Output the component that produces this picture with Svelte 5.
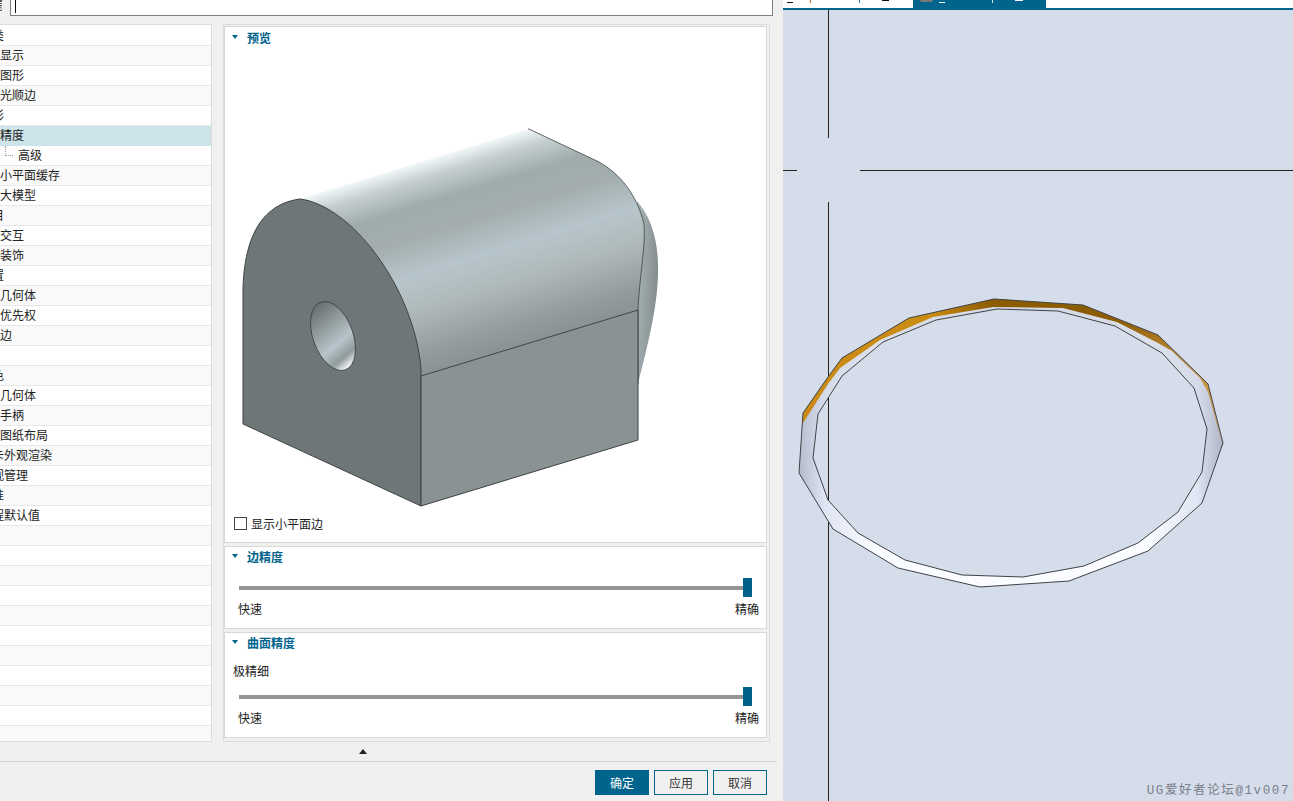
<script>
  // tree is scrolled sideways in the dialog, so some labels start cut off (cut: true)
  const rows = [
    { text: '类', cut: true },
    { text: '显示' },
    { text: '图形' },
    { text: '光顺边' },
    { text: '形', cut: true },
    { text: '精度', selected: true },
    { text: '高级', child: true },
    { text: '小平面缓存' },
    { text: '大模型' },
    { text: '目', cut: true },
    { text: '交互' },
    { text: '装饰' },
    { text: '置', cut: true },
    { text: '几何体' },
    { text: '优先权' },
    { text: '边' },
    { text: '' },
    { text: '色', cut: true },
    { text: '几何体' },
    { text: '手柄' },
    { text: '图纸布局' },
    { text: '卡外观渲染', cut: true },
    { text: '视管理', cut: true },
    { text: '准', cut: true },
    { text: '程默认值', cut: true },
    ...Array.from({ length: 11 }, () => ({ text: '' }))
  ];

  const outer = 'M803 413 L828 377 L842 358 L909 318 L994 299 L1083 305 L1158 335 L1208 384 L1223 443 L1202 503 L1148 551 L1069 581 L980 587 L898 568 L833 529 L799 473 Z';
  const inner = 'M818 414 L813 458 L828 500 L858 533 L905 560 L962 575 L1023 577 L1084 566 L1138 543 L1178 512 L1202 472 L1207 429 L1194 388 L1162 353 L1115 326 L1058 311 L997 309 L936 320 L883 342 L842 376 Z';
  const rim = 'M803 413 L828 377 L842 358 L909 318 L994 299 L1083 305 L1158 335 L1208 384 L1222 443 L1208 392 L1200 378 L1172 351 L1158 343 L1117 322 L1063 308 L993 307 L933 317 L880 340 L840 368 L828 384 L803 423 Z';
</script>

<div class="page">
  <div class="dialog">
    <div class="filter">
      <span class="filter-label">滤</span>
      <div class="filter-input"><span class="caret"></span></div>
    </div>

    <div class="body">
      <div class="tree">
        {#each rows as row, i}
          <div class="row" class:odd={i % 2 === 1} class:selected={row.selected}>
            {#if row.child}<span class="elbow"></span>{/if}
            <span class:cut={row.cut}>{row.text}</span>
          </div>
        {/each}
      </div>

      <div class="group">
        <section class="card preview">
          <h3 class="title"><i class="caret-down"></i>预览</h3>
          <svg class="model" viewBox="0 0 540 470" width="540" height="470">
            <defs>
              <linearGradient id="roof" gradientUnits="userSpaceOnUse" x1="189" y1="119" x2="249" y2="315">
                <stop offset="0" stop-color="#f2f7f8" />
                <stop offset="0.08" stop-color="#c5cfd0" />
                <stop offset="0.2" stop-color="#a0abab" />
                <stop offset="0.35" stop-color="#a4aeae" />
                <stop offset="0.52" stop-color="#b7c5cc" />
                <stop offset="0.7" stop-color="#aeb8b8" />
                <stop offset="0.9" stop-color="#929c9c" />
                <stop offset="1" stop-color="#8a9393" />
              </linearGradient>
              <linearGradient id="sliver" x1="0" y1="0" x2="1" y2="0.3">
                <stop offset="0" stop-color="#aab5b8" />
                <stop offset="1" stop-color="#858f90" />
              </linearGradient>
              <linearGradient id="bore" x1="0.3" y1="0" x2="0.5" y2="1">
                <stop offset="0" stop-color="#62696a" />
                <stop offset="0.35" stop-color="#929c9c" />
                <stop offset="0.65" stop-color="#b7c5cc" />
                <stop offset="0.85" stop-color="#8f9a9a" />
                <stop offset="1" stop-color="#f4f7f7" />
              </linearGradient>
            </defs>
            <path d="M412 156 C426 172 433 195 433 222 C434 260 420 310 413 339 Z" fill="url(#sliver)" />
            <path d="M75 154 L300 85 Q303 84 306 85 L372 116 C395 128 412 150 419 179 C421 200 414 235 413 265 L196 331 L196 323 C188 240 125 160 75 154 Z" fill="url(#roof)" />
            <g stroke="#3d4242" stroke-width="1" stroke-linejoin="round">
              <path d="M303 84 Q305 84 306 85 L372 116 C395 128 412 150 419 179 C421 200 414 235 413 265 L413 339" fill="none" stroke-width="0.8" />
              <path d="M18 379 L18 243 C20 180 45 158 75 154 C125 160 188 240 196 323 L196 461 Z" fill="#6f7677" />
              <path d="M196 331 L413 265 L413 395 L196 461 Z" fill="#8a9293" />
              <ellipse cx="108" cy="291" rx="20" ry="36" transform="rotate(-20 108 291)" fill="url(#bore)" stroke-width="0.8" />
            </g>
          </svg>
          <label class="check"><span class="box"></span>显示小平面边</label>
        </section>

        <section class="card edge">
          <h3 class="title"><i class="caret-down"></i>边精度</h3>
          <div class="slider"><span class="thumb"></span></div>
          <div class="ends"><span>快速</span><span>精确</span></div>
        </section>

        <section class="card face">
          <h3 class="title"><i class="caret-down"></i>曲面精度</h3>
          <div class="value">极精细</div>
          <div class="slider"><span class="thumb"></span></div>
          <div class="ends"><span>快速</span><span>精确</span></div>
        </section>
      </div>
    </div>

    <div class="collapse"><i class="caret-up"></i></div>

    <div class="footer">
      <button class="btn primary">确定</button>
      <button class="btn">应用</button>
      <button class="btn">取消</button>
    </div>
  </div>

  <div class="viewport">
    <div class="tabs">
      <div class="tab">
        <i class="mark dash"></i>
        <i class="mark tick orange"></i>
        <i class="mark tick blue"></i>
        <i class="mark top"></i>
      </div>
      <div class="tab active">
        <i class="mark part"></i>
        <i class="mark dash"></i>
        <i class="mark tick"></i>
        <i class="mark top"></i>
      </div>
    </div>

    <div class="canvas">
      <svg class="scene" viewBox="783 10 510 791" width="510" height="791">
        <defs>
          <linearGradient id="ring" gradientUnits="userSpaceOnUse" x1="799" y1="0" x2="1223" y2="0">
            <stop offset="0" stop-color="#b4bacb" />
            <stop offset="0.06" stop-color="#dfe5f3" />
            <stop offset="0.18" stop-color="#fbfcff" />
            <stop offset="0.82" stop-color="#fbfcff" />
            <stop offset="0.94" stop-color="#dfe5f3" />
            <stop offset="1" stop-color="#aab0c0" />
          </linearGradient>
          <linearGradient id="shade" gradientUnits="userSpaceOnUse" x1="0" y1="300" x2="0" y2="490">
            <stop offset="0" stop-color="#c3c9d8" stop-opacity="0.7" />
            <stop offset="1" stop-color="#c3c9d8" stop-opacity="0" />
          </linearGradient>
          <linearGradient id="rim" gradientUnits="userSpaceOnUse" x1="803" y1="0" x2="1222" y2="0">
            <stop offset="0" stop-color="#c98a18" />
            <stop offset="0.3" stop-color="#cc8d14" />
            <stop offset="0.45" stop-color="#8c5c00" />
            <stop offset="0.75" stop-color="#8c5c00" />
            <stop offset="0.95" stop-color="#c89545" />
            <stop offset="1" stop-color="#c89545" />
          </linearGradient>
        </defs>
        <path d="M828.500 10 V138 M828.500 202 V801 M783 170.500 H797 M860 170.500 H1293" stroke="#2a2018" fill="none" />
        <path d="{outer} {inner}" fill="url(#ring)" fill-rule="evenodd" />
        <path d="{outer} {inner}" fill="url(#shade)" fill-rule="evenodd" />
        <path d={rim} fill="url(#rim)" />
        <path d={outer} fill="none" stroke="#3f4246" stroke-width="1" />
        <path d={inner} fill="none" stroke="#3f4246" stroke-width="1" />
      </svg>
      <div class="watermark">UG爱好者论坛@1v007</div>
    </div>
  </div>
</div>

<style>
  :global(body) {
    margin: 0;
    overflow: hidden;
  }

  .page {
    display: flex;
    width: 1293px;
    height: 801px;
    overflow: hidden;
    font-family: "Noto Sans CJK SC", "Liberation Sans", sans-serif;
    font-size: 12px;
    color: #222;
  }

  /* Dialog */
  .dialog {
    width: 783px;
    flex: none;
    background: #f0f0f0;
    display: flex;
    flex-direction: column;
  }

  .filter {
    height: 16px;
    display: flex;
    margin-right: 10px;
  }

  .filter-label {
    width: 10px;
    margin-left: -8px;
    margin-right: -2px;
    flex: none;
    line-height: 10px;
    height: 12px;
    overflow: hidden;
    color: #333;
  }

  .filter-input {
    flex: 1;
    margin-left: 10px;
    background: #fff;
    border: 1px solid #808080;
    border-top: 0;
    padding-left: 4px;
  }

  .caret {
    display: block;
    width: 1px;
    height: 13px;
    background: #111;
  }

  .body {
    display: flex;
    gap: 11px;
    margin-top: 8px;
    height: 718px;
  }

  /* Tree */
  .tree {
    width: 211px;
    height: 716px;
    flex: none;
    overflow: hidden;
    background: #fff;
    border: 1px solid #dcdcdc;
    border-left: 0;
  }

  .row {
    height: 18px;
    padding-bottom: 1px;
    border-bottom: 1px solid #e8e8e8;
    display: flex;
    align-items: center;
    white-space: nowrap;
    line-height: 18px;
  }

  .row:first-child {
    margin-top: 1px;
  }

  .row.odd {
    background: #f9f9f9;
  }

  .row.selected {
    background: #cde4ea;
    border-bottom-color: #cde4ea;
  }

  .cut {
    margin-left: -8px;
  }

  .elbow {
    width: 8px;
    height: 10px;
    margin: 0 5px 9px 5px;
    border-left: 1px dotted #999;
    border-bottom: 1px dotted #999;
    box-sizing: border-box;
  }

  /* Right column */
  .group {
    width: 547px;
    flex: none;
    box-sizing: border-box;
    border: 1px solid #dcdcdc;
    padding: 1px 2px 3px 0;
    display: flex;
    flex-direction: column;
    gap: 3px;
  }

  .card {
    background: #fff;
    border: 1px solid #d8d8d8;
    box-sizing: border-box;
    display: flex;
    flex-direction: column;
  }

  .preview {
    height: 517px;
    position: relative;
  }

  .edge {
    height: 83px;
  }

  .face {
    height: 106px;
  }

  .title {
    margin: 0;
    height: 18px;
    flex: none;
    padding-left: 7px;
    display: flex;
    align-items: center;
    font-size: 12px;
    font-weight: 700;
    color: #00648c;
  }

  .preview .title {
    height: 20px;
  }

  .caret-down {
    width: 0;
    height: 0;
    margin-right: 9px;
    border: 3.500px solid transparent;
    border-top: 4px solid #00648c;
    border-bottom: 0;
  }

  .model {
    display: block;
    margin-top: -2px;
    flex: none;
  }

  .check {
    display: flex;
    align-items: center;
    height: 20px;
    position: absolute;
    left: 9px;
    top: 486px;
  }

  .box {
    width: 13px;
    height: 13px;
    box-sizing: border-box;
    border: 1px solid #444;
    background: #fff;
    margin-right: 4px;
  }

  .slider {
    position: relative;
    height: 19px;
    margin: 13px 0 0 14px;
    width: 513px;
  }

  .slider::before {
    content: '';
    position: absolute;
    left: 0;
    right: 5px;
    top: 8px;
    height: 4px;
    background: #959595;
  }

  .thumb {
    position: absolute;
    right: 0;
    top: 0;
    width: 9px;
    height: 19px;
    background: #006289;
  }

  .ends {
    display: flex;
    justify-content: space-between;
    padding: 0 7px 0 13px;
    margin-top: 2px;
    line-height: 20px;
  }

  .value {
    padding-left: 8px;
    line-height: 20px;
    margin-top: 10px;
  }

  .face .slider {
    margin-top: 6px;
  }

  /* Footer */
  .collapse {
    height: 19px;
    display: flex;
    align-items: center;
    padding-left: 359px;
    margin-right: 6px;
    border-bottom: 1px solid #d6d6d6;
  }

  .caret-up {
    width: 0;
    height: 0;
    border: 4.500px solid transparent;
    border-bottom: 5px solid #222;
    border-top: 0;
  }

  .footer {
    display: flex;
    justify-content: flex-end;
    gap: 5px;
    padding: 8px 16px 0 0;
  }

  .btn {
    width: 54px;
    height: 25px;
    padding: 0;
    border: 1px solid #00648c;
    background: #f0f0f0;
    color: #333;
    font: inherit;
  }

  .btn.primary {
    background: #00648c;
    color: #fff;
  }

  /* Viewport */
  .viewport {
    flex: 1;
    display: flex;
    flex-direction: column;
    background: #d5dcea;
  }

  .tabs {
    height: 8px;
    background: #fff;
    border-bottom: 2px solid #00648c;
    display: flex;
    overflow: hidden;
  }

  .tab {
    width: 130px;
    display: flex;
    align-items: flex-start;
  }

  .tab.active {
    width: 133px;
    background: #00648c;
  }

  .mark {
    display: block;
    flex: none;
    background: #111;
  }

  .tab .dash {
    width: 6px;
    height: 1px;
    margin: 2px 0 0 4px;
  }

  .tab .tick {
    width: 1px;
    height: 3px;
    margin-left: 17px;
  }

  .tab .orange {
    background: #c8641e;
  }

  .tab .blue {
    background: #3c78b4;
    margin-left: 48px;
  }

  .tab .top {
    width: 7px;
    height: 1px;
    margin-left: 22px;
  }

  .active .part {
    width: 13px;
    height: 2px;
    margin-left: 7px;
    background: #777;
    border-radius: 0 0 7px 7px;
  }

  .active .dash {
    background: #fff;
    margin-left: 6px;
  }

  .active .tick {
    background: #cfe6f5;
    margin-left: 47px;
  }

  .active .top {
    background: #fff;
    width: 8px;
    margin-left: 22px;
  }

  .canvas {
    flex: 1;
    position: relative;
    overflow: hidden;
  }

  .scene {
    display: block;
  }

  .watermark {
    position: absolute;
    right: 3px;
    bottom: 2px;
    font-family: "Liberation Mono", "Noto Sans CJK SC", monospace;
    font-size: 12.500px;
    line-height: 16px;
    letter-spacing: 1.600px;
    color: #7a808c;
  }
</style>
